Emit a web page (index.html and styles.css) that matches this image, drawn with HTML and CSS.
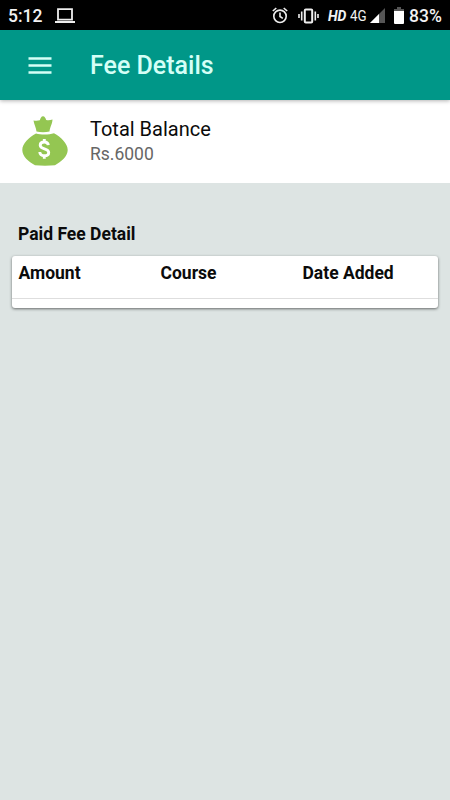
FILE: index.html
```html
<!DOCTYPE html>
<html lang="en">
<head>
<meta charset="utf-8">
<title>Fee Details</title>
<link rel="stylesheet" href="styles.css">
</head>
<body>
<div class="status">
  <span class="time">5:12</span>
  <svg class="laptop" width="20" height="16" viewBox="0 0 20 16"><path d="M3 1.200h14v10.500H3z" fill="none" stroke="#eee" stroke-width="1.800"/><path d="M0 13h20v2H0z" fill="#eee"/></svg>
  <div class="indicators">
    <svg class="alarm" width="16" height="17" viewBox="0 0 16 17" fill="none" stroke="#eee" stroke-width="1.600"><circle cx="8" cy="9.300" r="6.200"/><path d="M8 5.500v4l2.800 1.800M.8 4 4.300 1M15.200 4l-3.500-3"/></svg>
    <svg class="vibrate" width="21" height="16" viewBox="0 0 21 16"><rect x="6.800" y="1.400" width="7.400" height="13.200" rx="1" fill="none" stroke="#eee" stroke-width="2"/><path d="M3.700 3.500v9M17.300 3.500v9M1 6v4M20 6v4" stroke="#eee" stroke-width="1.600"/></svg>
    <span class="hd">HD</span>
    <span class="network">4G</span>
    <svg class="signal" width="15" height="15" viewBox="0 0 15 15"><path d="M15 0v15H0z" fill="#555"/><path d="M9 6v9H0z" fill="#fff"/></svg>
    <svg class="battery" width="10" height="17" viewBox="0 0 10 17"><path d="M3 0h4v2h3v3H0V2h3z" fill="#555"/><path d="M0 4h10v12a1 1 0 0 1-1 1H1a1 1 0 0 1-1-1z" fill="#fff"/></svg>
    <span class="percent">83%</span>
  </div>
</div>
<header class="appbar">
  <svg class="menu" width="24" height="17" viewBox="0 0 24 17"><path d="M.5 1.500h23M.5 8.500h23M.5 15.500h23" stroke="#d5fff6" stroke-width="2.600"/></svg>
  <h1 class="title">Fee Details</h1>
</header>
<section class="balance">
  <svg class="bag" width="46" height="50" viewBox="0 0 46 50"><path d="M11.500 4.500c2 .3 4 .5 6.300-.2C18.500 2 19.300.2 21 .2s2.500 1.800 3.200 3.800c2.200.7 4 .3 6.300-.5-.1 4.500-2.500 7-3 12-4 1.100-9 1.100-13 0-.3-4-2.500-7-3-11z" fill="#94c652"/><path d="M14 17.500c5 1.500 13 1.500 18-.3C39 21 45.700 27.500 45.700 34c0 6.500-6.500 11.500-12.700 15.200-6 .6-14 .6-20 0C6.500 45.500.3 40.500.3 34 .3 27.500 7 21.500 14 17.500z" fill="#94c652"/><path d="M26.300 29.200c-.2-2-1.700-3.200-4-3.200-2.400 0-4.100 1.200-4.100 3.200 0 4.600 8.500 2.700 8.500 7.200 0 2.100-1.800 3.300-4.300 3.300-2.700 0-4.500-1.300-4.600-3.700M22.300 23v3M22.300 39.700v3" fill="none" stroke="#fff" stroke-width="2.900"/></svg>
  <div class="summary">
    <div class="label">Total Balance</div>
    <div class="value">Rs.6000</div>
  </div>
</section>
<main class="content">
  <h2 class="heading">Paid Fee Detail</h2>
  <div class="card">
    <div class="columns"><span>Amount</span><span>Course</span><span>Date Added</span></div>
  </div>
</main>
</body>
</html>
```
FILE: styles.css
```css
* { box-sizing: border-box; }
body {
  margin: 0;
  min-height: 800px;
  background: #dde4e3;
  font-family: Roboto, "Liberation Sans", sans-serif;
  color: #0b0b0b;
}
svg { display: block; flex: none; }
.status {
  display: flex;
  align-items: center;
  height: 30px;
  padding: 1px 8px 0;
  background: #000;
  color: #f2f2f2;
  white-space: nowrap;
}
.time { width: 47px; font-size: 17.5px; font-weight: 500; line-height: 30px; }
.indicators { display: flex; align-items: center; margin-left: auto; }
.alarm { margin-right: 10px; }
.vibrate { margin-right: 9px; }
.hd { width: 22px; font-size: 14px; font-weight: 700; font-style: italic; }
.network { width: 20px; font-size: 15.5px; transform: scaleX(.86); transform-origin: left; }
.signal { margin-right: 9px; }
.battery { margin-right: 5px; }
.percent { width: 33px; font-size: 17.5px; font-weight: 500; }
.appbar {
  position: relative;
  display: flex;
  align-items: center;
  height: 70px;
  padding: 0 28px;
  background: #009788;
  box-shadow: 0 1px 4px rgba(0, 0, 0, .3);
}
.title {
  margin: 0 0 0 38px;
  padding-top: 2px;
  color: #d5fff6;
  font-size: 25px;
  font-weight: 500;
  line-height: 30px;
}
.balance {
  display: flex;
  height: 83px;
  padding: 16px 22px 0;
  background: #fff;
}
.summary { margin-left: 22px; }
.label { font-size: 20px; line-height: 26px; }
.value { padding-top: 1px; color: #666; font-size: 17.5px; line-height: 23px; }
.content { padding: 40px 12px 0; }
.heading { margin: 0 0 11px 6px; font-size: 17.5px; font-weight: 700; line-height: 22px; }
.card {
  height: 52px;
  border-radius: 3px;
  background: #fff;
  box-shadow: 0 1px 3px rgba(0, 0, 0, .55);
}
.columns {
  display: grid;
  grid-template-columns: repeat(3, 1fr);
  height: 43px;
  padding-top: 6px;
  border-bottom: 1px solid #dedede;
  font-size: 17.5px;
  font-weight: 700;
  line-height: 22px;
}
.columns span { padding-left: 6.5px; }
```
